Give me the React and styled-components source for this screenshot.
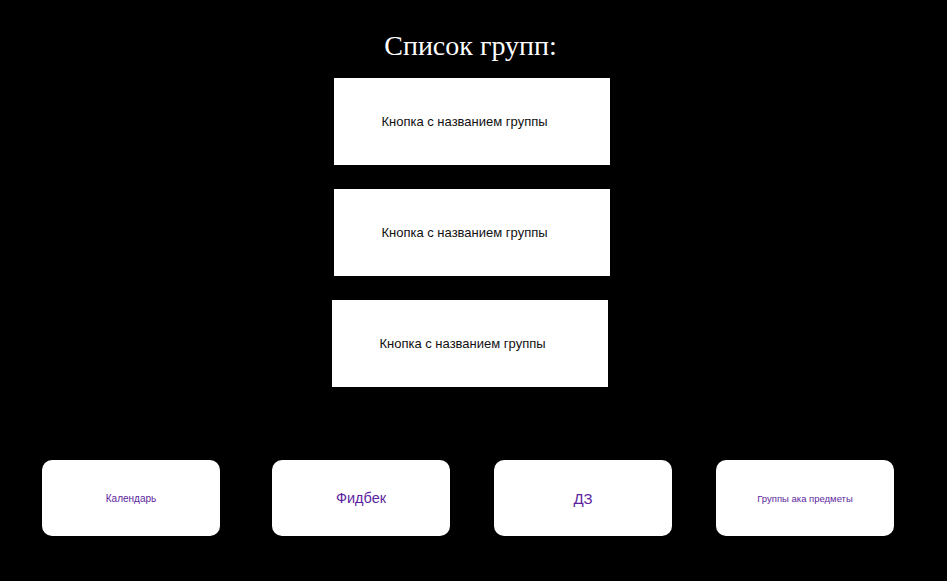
import styled, { createGlobalStyle } from "styled-components";

const GlobalStyle = createGlobalStyle`
    html, body {
        margin: 0;
        background: #000;
    }
`;

const Page = styled.div`
    width: 947px;
    height: 581px;
    background: #000;
    display: flex;
    flex-direction: column;
    align-items: center;
    font-family: "Liberation Sans", Arial, sans-serif;
`;

const Title = styled.h1`
    margin: 27px 6px 0 0;
    height: 37px;
    line-height: 37px;
    font-family: "Liberation Serif", "Times New Roman", serif;
    font-weight: 400;
    font-size: 28px;
    color: #fff;
    text-align: center;
`;

const GroupList = styled.div`
    margin: 14px 4px 0 0;
    display: flex;
    flex-direction: column;
    align-items: center;
    gap: 24px;
`;

const GroupButton = styled.button`
    width: 276px;
    height: 87px;
    margin-right: ${props => props.shift || 0}px;
    padding: 0 14px 0 0;
    background: #fff;
    border: none;
    border-radius: 0;
    color: #111;
    font-family: "Liberation Sans", Arial, sans-serif;
    font-size: 13px;
    cursor: pointer;
`;

const NavRow = styled.div`
    margin-top: 73px;
    width: 100%;
    box-sizing: border-box;
    padding: 0 53px 0 42px;
    display: flex;
    justify-content: space-between;
`;

const NavCard = styled.button`
    width: 178px;
    height: 76px;
    margin-left: ${props => props.nudge || 0}px;
    background: #fff;
    border: none;
    border-radius: 10px;
    color: #5e1f9e;
    font-family: "Liberation Sans", Arial, sans-serif;
    font-size: ${props => props.size}px;
    cursor: pointer;
`;

const groups = [
    { name: "Кнопка с названием группы", shift: 0 },
    { name: "Кнопка с названием группы", shift: 0 },
    { name: "Кнопка с названием группы", shift: 4 },
];

const navItems = [
    { label: "Календарь", size: 10, nudge: 0 },
    { label: "Фидбек", size: 14.5, nudge: 8 },
    { label: "ДЗ", size: 15, nudge: 0 },
    { label: "Группы ака предметы", size: 9.5, nudge: 0 },
];

export default function App() {
    return (
        <Page>
            <GlobalStyle />
            <Title>Список групп:</Title>
            <GroupList>
                {groups.map((g, i) => (
                    <GroupButton key={i} shift={g.shift}>{g.name}</GroupButton>
                ))}
            </GroupList>
            <NavRow>
                {navItems.map(item => (
                    <NavCard key={item.label} size={item.size} nudge={item.nudge}>{item.label}</NavCard>
                ))}
            </NavRow>
        </Page>
    );
}
